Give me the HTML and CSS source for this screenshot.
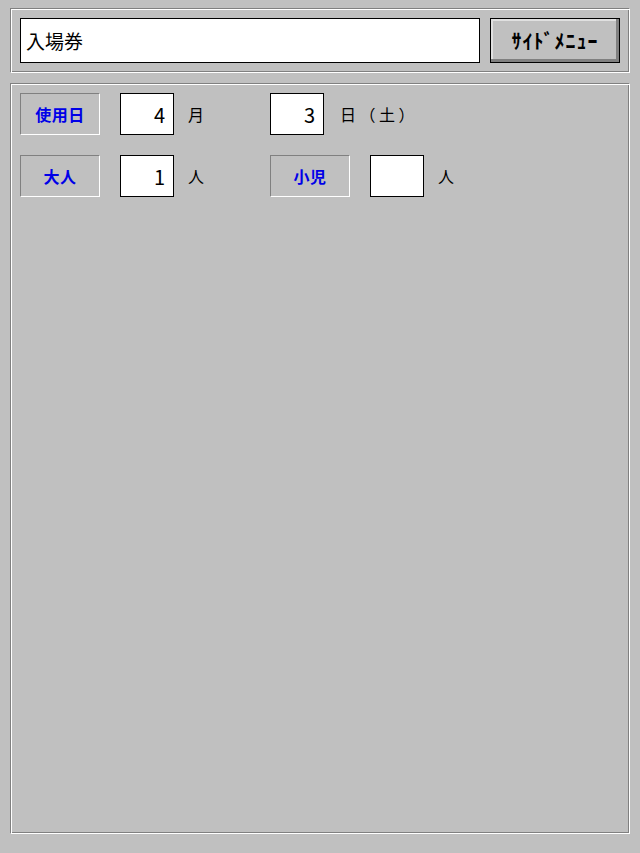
FILE: index.html
```html
<!DOCTYPE html>
<html lang="ja">
<head>
<meta charset="utf-8">
<title>入場券</title>
<link rel="stylesheet" href="styles.css">
</head>
<body>
<div class="panel top">
  <input class="title-field" type="text" value="入場券" readonly>
  <button class="menu-btn" type="button">ｻｲﾄﾞﾒﾆｭｰ</button>
</div>
<div class="panel main">
  <div class="row">
    <div class="label">使用日</div>
    <input class="num" type="text" value="4" readonly>
    <div class="unit">月</div>
    <input class="num" type="text" value="3" readonly>
    <div class="unit wide">日（土）</div>
  </div>
  <div class="row">
    <div class="label">大人</div>
    <input class="num" type="text" value="1" readonly>
    <div class="unit">人</div>
    <div class="label">小児</div>
    <input class="num" type="text" value="" readonly>
    <div class="unit last">人</div>
  </div>
</div>
</body>
</html>
```
FILE: styles.css
```css
html, body {
  margin: 0;
  padding: 0;
  background: #c0c0c0;
}
body {
  padding: 8px 10px 0;
  font-family: "Noto Sans CJK JP", "Noto Sans", sans-serif;
  color: #000;
}
.panel {
  box-sizing: border-box;
  border: 1px solid;
  border-color: #808080 #ffffff #ffffff #808080;
  box-shadow: inset 1px 1px #ffffff, inset -1px -1px #808080;
  padding: 9px;
}
.top {
  display: flex;
  gap: 10px;
  height: 65px;
}
.title-field {
  flex: 1;
  box-sizing: border-box;
  height: 45px;
  margin: 0;
  border: 1px solid #000;
  background: #fff;
  font-family: inherit;
  font-size: 19px;
  padding: 0 5px;
  color: #000;
  outline: none;
}
.menu-btn {
  box-sizing: border-box;
  width: 130px;
  height: 45px;
  margin: 0;
  padding: 0;
  border: 1px solid #000;
  background: #c0c0c0;
  box-shadow: inset -3px -3px #808080, inset 2px 2px #e0e0e0;
  font-family: inherit;
  font-weight: bold;
  font-size: 20px;
  letter-spacing: 1px;
  color: #000;
}
.main {
  margin-top: 10px;
  height: 751px;
  display: flex;
  flex-direction: column;
  gap: 20px;
}
.row {
  display: flex;
  align-items: center;
  height: 42px;
}
.label {
  box-sizing: border-box;
  width: 80px;
  height: 42px;
  margin-right: 20px;
  border: 1px solid;
  border-color: #808080 #ffffff #ffffff #808080;
  color: #0000e8;
  font-weight: bold;
  font-size: 16px;
  letter-spacing: 0.5px;
  line-height: 40px;
  text-align: center;
}
.num {
  box-sizing: border-box;
  width: 54px;
  height: 42px;
  margin: 0;
  border: 1px solid #000;
  background: #fff;
  font-family: inherit;
  font-size: 20px;
  text-align: right;
  padding: 0 8px 0 0;
  color: #000;
  outline: none;
}
.unit {
  box-sizing: border-box;
  width: 96px;
  padding-left: 14px;
  font-size: 16px;
}
.unit.wide {
  width: auto;
  padding-left: 16px;
  letter-spacing: 3.5px;
}
.unit.last {
  width: auto;
}
```
